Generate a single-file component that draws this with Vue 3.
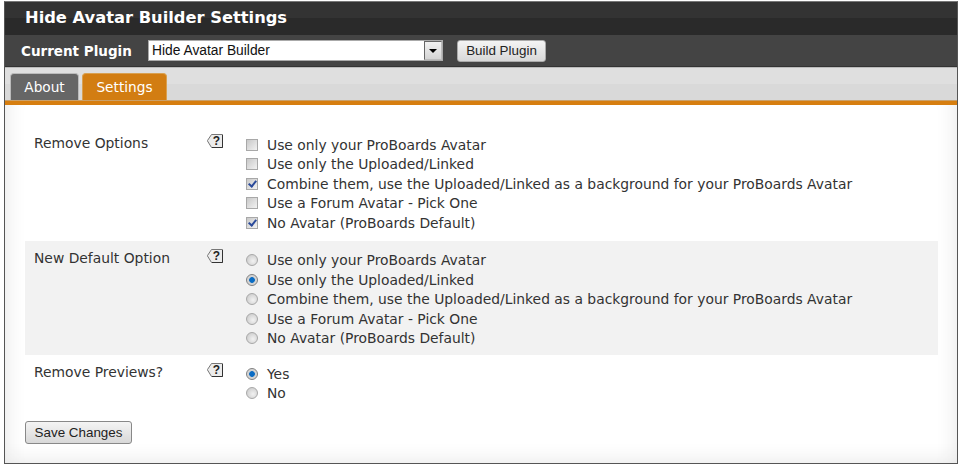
<script setup>
const choices = [
  'Use only your ProBoards Avatar',
  'Use only the Uploaded/Linked',
  'Combine them, use the Uploaded/Linked as a background for your ProBoards Avatar',
  'Use a Forum Avatar - Pick One',
  'No Avatar (ProBoards Default)'
]
const sections = [
  { label: 'Remove Options', type: 'checkbox', options: choices, checked: [2, 4], cls: 'first' },
  { label: 'New Default Option', type: 'radio', options: choices, checked: [1], cls: 'alt' },
  { label: 'Remove Previews?', type: 'radio', options: ['Yes', 'No'], checked: [0], cls: 'last' }
]
</script>

<template>
  <div class="frame">
    <header class="title">Hide Avatar Builder Settings</header>
    <div class="plugin">
      <span class="plugin-label">Current Plugin</span>
      <div class="select">
        <span class="select-value">Hide Avatar Builder</span>
        <span class="select-arrow"><i></i></span>
      </div>
      <button class="btn build" type="button">Build Plugin</button>
    </div>
    <nav class="tabs">
      <a class="tab">About</a>
      <a class="tab active">Settings</a>
    </nav>
    <main class="body">
      <section v-for="s in sections" :key="s.label" class="row" :class="s.cls">
        <div class="label">{{ s.label }}</div>
        <div class="help">
          <svg width="18" height="16" viewBox="0 0 18 16">
            <path d="M5.5 1.5H16.5V14.5H5.5L1.5 8V7.5Z" fill="#ececec" stroke="#777" />
            <path d="M6 14.5H16.5V2" fill="none" stroke="#333" />
            <text x="10.5" y="12" text-anchor="middle" class="q">?</text>
          </svg>
        </div>
        <div class="options">
          <label v-for="(o, i) in s.options" :key="o" class="option">
            <input :type="s.type" :checked="s.checked.includes(i)" />
            <span>{{ o }}</span>
          </label>
        </div>
      </section>
      <button class="btn save" type="button">Save Changes</button>
    </main>
  </div>
</template>

<style>
html, body { margin: 0; background: #fff; }
</style>

<style scoped>
.frame {
  width: 954px;
  height: 463px;
  margin-left: 4px;
  margin-top: 1px;
  box-sizing: border-box;
  border: 1px solid #555;
  border-top-color: #777;
  display: flex;
  flex-direction: column;
  font-family: "DejaVu Sans", Verdana, sans-serif;
  overflow: hidden;
}
.title {
  height: 33px;
  flex: none;
  box-sizing: border-box;
  padding: 6px 0 0 20px;
  background: linear-gradient(#333 0, #333 50%, #2a2a2a 50%, #2a2a2a 100%);
  color: #fff;
  font-weight: bold;
  font-size: 16.3px;
  line-height: 20px;
}
.plugin {
  height: 32px;
  flex: none;
  display: flex;
  align-items: center;
  padding-left: 16px;
  background: #444;
  border-bottom: 1px solid #333;
  box-sizing: border-box;
}
.plugin-label {
  color: #fff;
  font-weight: bold;
  font-size: 13.5px;
  width: 127px;
}
.select {
  width: 295px;
  height: 21px;
  box-sizing: border-box;
  background: #fff;
  border: 1px solid #aaa;
  display: flex;
  align-items: center;
  justify-content: space-between;
  font-family: "Liberation Sans", Arial, sans-serif;
  font-size: 13.8px;
  color: #111;
  padding-left: 3px;
}
.select-arrow {
  width: 18px;
  height: 19px;
  box-sizing: border-box;
  border: 1px solid #666;
  border-right-color: #bbb;
  border-bottom-color: #bbb;
  background: linear-gradient(#f2f2f2, #d4d4d4);
  display: flex;
  align-items: center;
  justify-content: center;
}
.select-arrow i {
  width: 0;
  height: 0;
  border: 4px solid transparent;
  border-top: 4px solid #000;
  border-bottom: 0;
}
.btn {
  font-family: "Liberation Sans", Arial, sans-serif;
  font-size: 13.4px;
  color: #222;
  background: linear-gradient(#f4f4f4, #d8d8d8);
  border: 1px solid #888;
  border-radius: 3px;
  padding: 0;
}
.build {
  margin-left: 14px;
  width: 89px;
  height: 22px;
  border-color: #aaa;
}
.tabs {
  height: 34px;
  flex: none;
  box-sizing: border-box;
  display: flex;
  align-items: flex-end;
  gap: 3px;
  padding-left: 5px;
  background: linear-gradient(#dfdfdf 0, #dfdfdf 50%, #d9d9d9 50%, #d9d9d9 100%);
  border-top: 1px solid #bbb;
  border-bottom: 1px solid #c9a06a;
}
.tab {
  height: 27px;
  line-height: 27px;
  box-sizing: border-box;
  width: 69px;
  text-align: center;
  background: #666;
  color: #fff;
  font-size: 13.7px;
  border-radius: 4px 4px 0 0;
  border: 1px solid #bbb;
  border-bottom: 0;
}
.tab.active {
  width: 85px;
  background: #d27d12;
  border-color: #d9a050;
}
.body {
  flex: 1;
  min-height: 0;
  border-top: 4px solid #d67e10;
  padding: 0 20px;
  background: #fff;
  box-shadow: inset 0 -22px 22px -22px #e4e4e4, inset 22px 0 22px -22px #e4e4e4, inset -22px 0 22px -22px #e4e4e4;
}
.row {
  display: flex;
  width: 913px;
  box-sizing: border-box;
  padding: 0 9px;
  color: #333;
  font-size: 13.87px;
}
.row.first { margin-top: 20px; padding-top: 10px; height: 116px; }
.row.alt { padding-top: 9px; height: 114px; background: #f2f2f2; }
.row.last { padding-top: 9px; height: 50px; }
.label { width: 172px; flex: none; line-height: 17px; }
.help { width: 40px; flex: none; }
.help svg { display: block; margin-top: -2px; }
.q {
  font-family: "Liberation Sans", Arial, sans-serif;
  font-weight: bold;
  font-size: 12px;
  fill: #222;
}
.options { display: flex; flex-direction: column; }
.row.alt .options { padding-top: .5px; }
.option {
  display: flex;
  align-items: center;
  height: 19.5px;
  gap: 9px;
}
.option input {
  appearance: none;
  margin: 0;
  width: 12px;
  height: 12px;
  flex: none;
  box-sizing: border-box;
  border: 1px solid #a8a8a8;
  background: linear-gradient(135deg, #c8c8c8, #f2f2f2);
  position: relative;
}
.option input[type="radio"] { border-radius: 50%; background: radial-gradient(circle at 60% 60%, #f2f2f2, #c4c4c4); }
.option input[type="radio"]:checked {
  background: radial-gradient(circle at 50% 50%, #0a6cc4 0 2.5px, #d0d0d0 3.2px, #e0e0e0);
  border-color: #808080;
}
.option input[type="checkbox"]:checked::after {
  content: "";
  position: absolute;
  left: 3px;
  top: 0.5px;
  width: 3px;
  height: 6px;
  border: solid #2a4a9a;
  border-width: 0 2px 2px 0;
  transform: rotate(40deg);
}
.save {
  display: block;
  width: 107px;
  height: 23px;
  margin-top: 16px;
  margin-left: 0;
}
</style>
